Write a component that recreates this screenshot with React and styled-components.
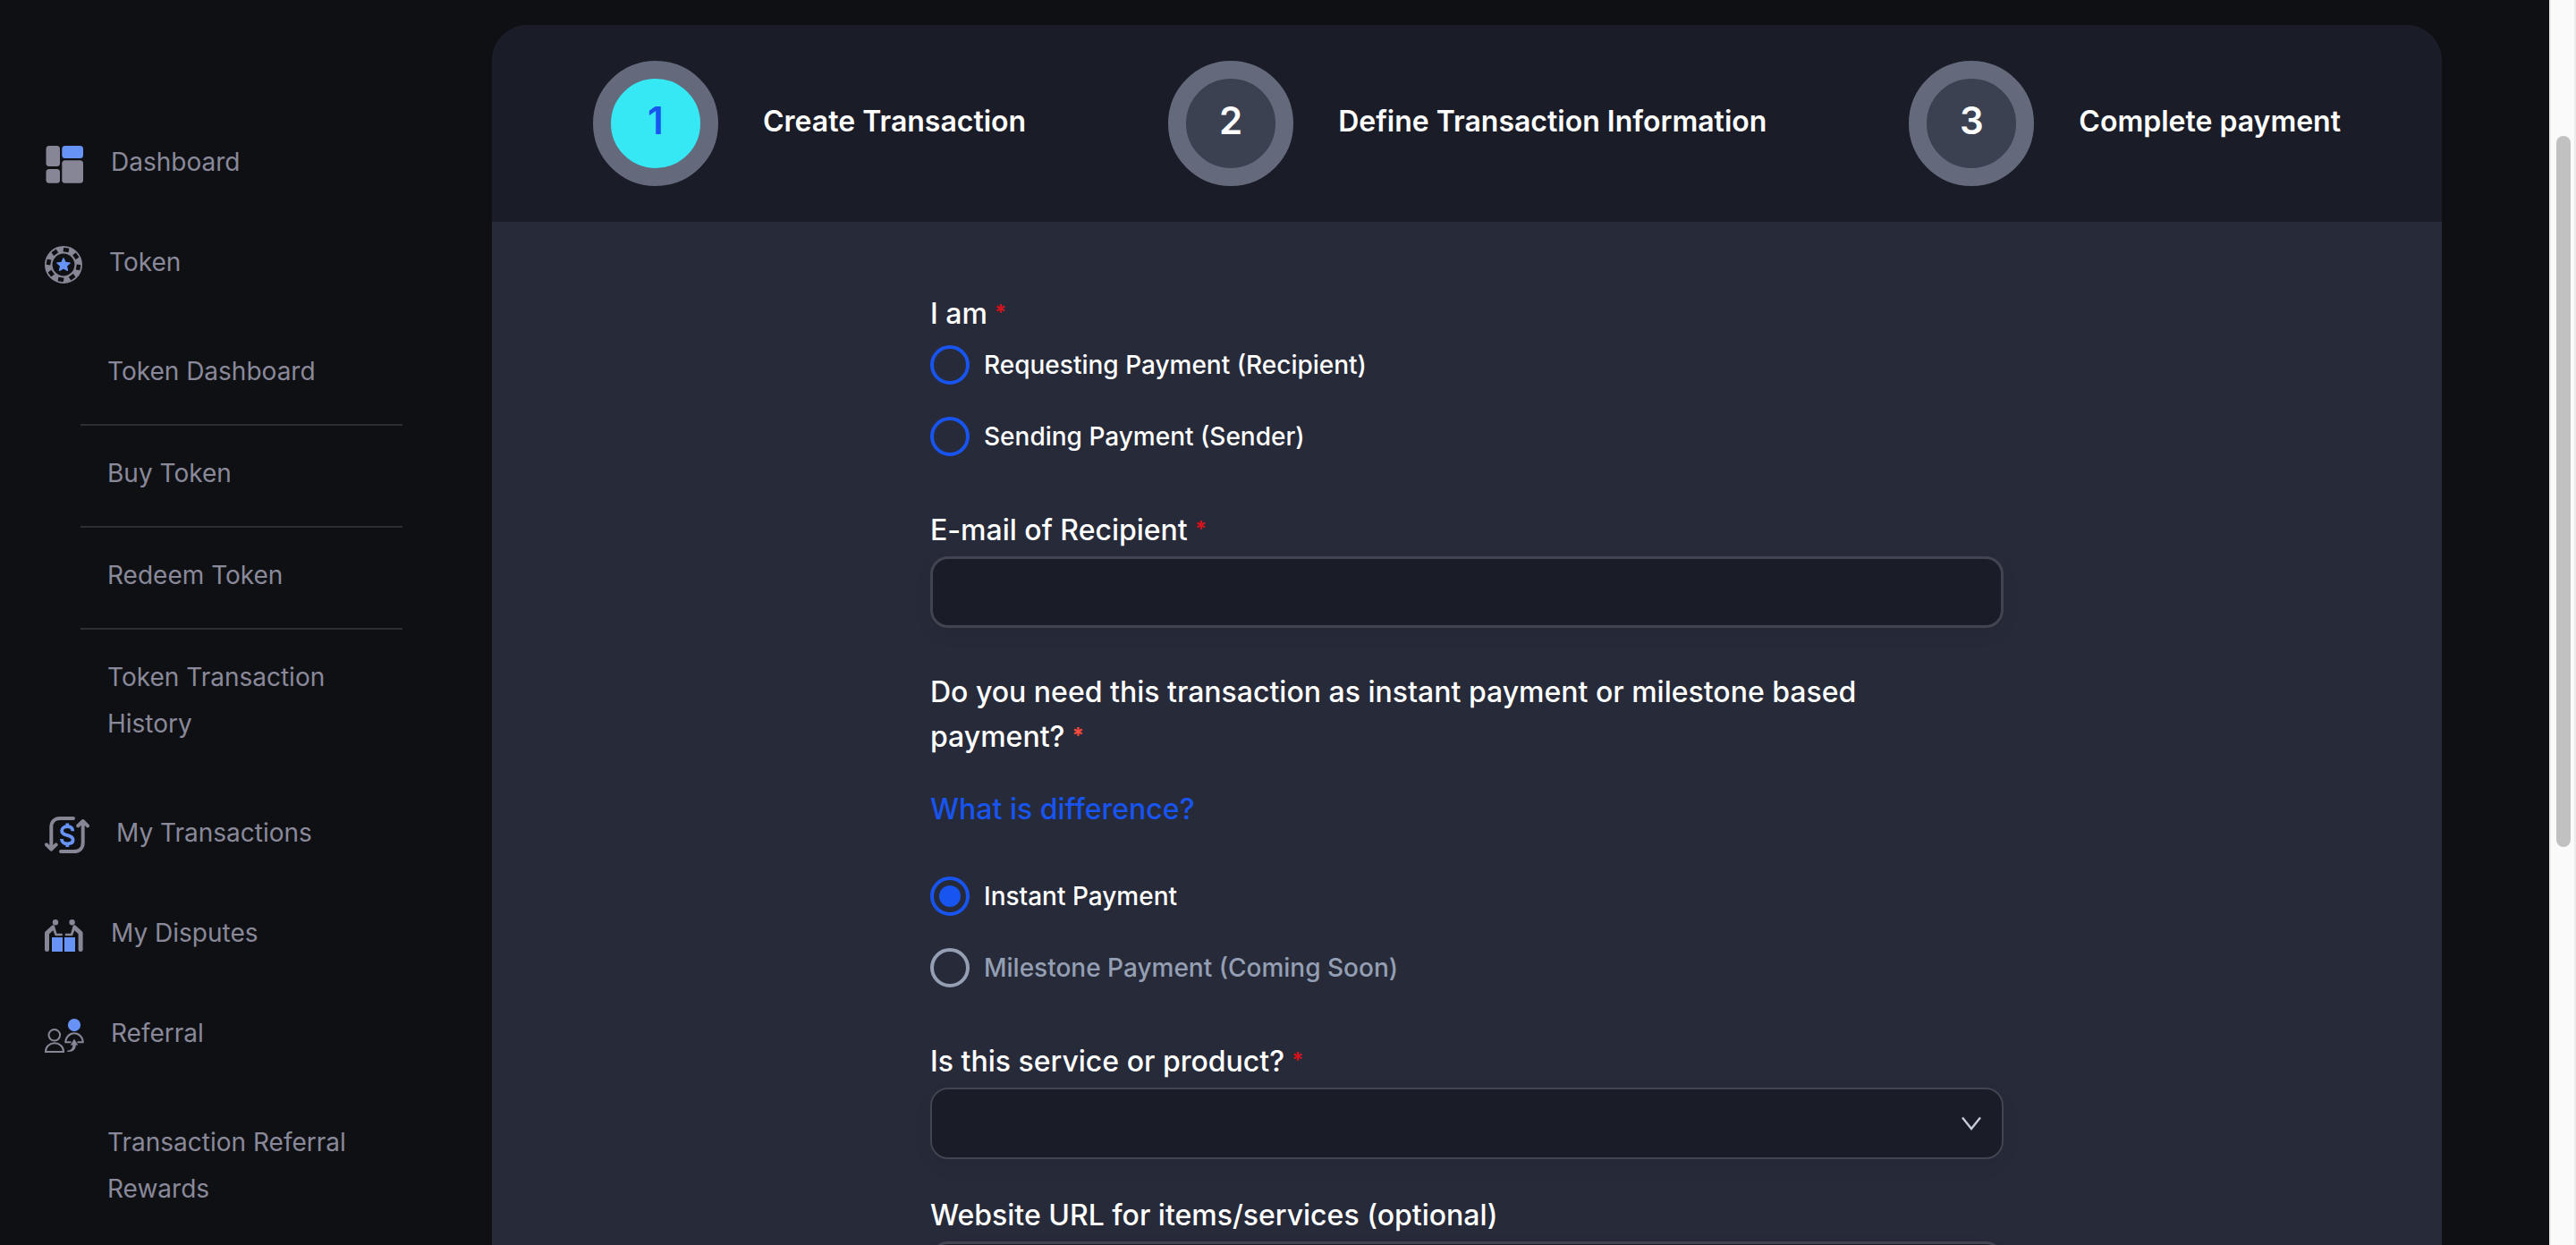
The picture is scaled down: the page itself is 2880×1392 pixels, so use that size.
import React from "react";
import styled, { createGlobalStyle, ThemeProvider } from "styled-components";

const theme = {
  page: "#0f1014",
  panel: "#1a1c27",
  surface: "#272a38",
  border: "#424551",
  divider: "#2c2e33",
  muted: "#8a899a",
  icon: "#878696",
  iconAccent: "#6693f5",
  accent: "#1754f0",
  cyan: "#35e8f3",
  ring: "#646a7c",
  stepOff: "#3b4151",
  disabled: "#949fb3",
};

const GlobalStyle = createGlobalStyle`
  *, *::before, *::after { box-sizing: border-box; }
  body {
    margin: 0;
    background: ${theme.page};
    color: #fff;
    font-family: Inter, "Liberation Sans", sans-serif;
    font-size: 32px;
  }
`;

const Shell = styled.div`
  display: flex;
  height: 100vh;
  overflow: hidden;
  background: ${(p) => p.theme.page};
`;

/* Sidebar */

const Sidebar = styled.nav`
  flex: 0 0 550px;
  padding: 125px 100px 0 50px;
  color: ${(p) => p.theme.muted};
  font-size: 28px;
  line-height: 52px;
`;

const NavLink = styled.a`
  display: flex;
  align-items: center;
  gap: 30px;
  height: 112px;
  color: inherit;
  text-decoration: none;
`;

const NavIcon = styled.svg`
  flex: none;
  display: block;
  box-sizing: content-box;
  padding-top: 6px;
`;

const SubList = styled.ul`
  margin: 0 0 0 40px;
  padding: 13px 0 7px;
  list-style: none;
`;

const SubItem = styled.li`
  padding: 27px 0 33px 30px;

  & + & {
    border-top: 2px solid ${(p) => p.theme.divider};
  }
`;

const SubLink = styled.a`
  display: block;
  color: inherit;
  text-decoration: none;
`;

/* Main card */

const Main = styled.main`
  flex: 1;
  min-width: 0;
  padding: 28px 120px 0 0;
`;

const Card = styled.section`
  min-height: 100%;
  border-radius: 40px 40px 0 0;
  background: ${(p) => p.theme.surface};
  overflow: hidden;
`;

const Steps = styled.ol`
  display: flex;
  align-items: center;
  justify-content: space-between;
  height: 220px;
  margin: 0;
  padding: 0 113px;
  list-style: none;
  background: ${(p) => p.theme.panel};
`;

const Step = styled.li`
  display: flex;
  align-items: center;
  gap: 50px;
  font-weight: 600;
`;

const StepNumber = styled.span`
  display: flex;
  align-items: center;
  justify-content: center;
  width: 140px;
  height: 140px;
  padding-bottom: 8px;
  border: 20px solid ${(p) => p.theme.ring};
  border-radius: 50%;
  background: ${(p) => (p.$active ? p.theme.cyan : p.theme.stepOff)};
  color: ${(p) => (p.$active ? p.theme.accent : "#fff")};
  font-size: 42px;
`;

const StepTitle = styled.span`
  padding-bottom: 6px;
`;

const Form = styled.form`
  width: 100%;
  max-width: 1200px;
  margin: 0 auto;
  padding-top: 78px;
  font-weight: 500;
  line-height: 50px;
`;

const Group = styled.fieldset`
  min-width: 0;
  margin: 0 0 58px;
  padding: 0;
  border: 0;
`;

const Legend = styled.legend`
  max-width: 1120px;
  padding: 0;
`;

const Field = styled.div`
  margin-bottom: ${(p) => p.$after}px;
`;

const Label = styled.label`
  display: block;
  margin-bottom: 4px;
`;

const Required = styled.span`
  margin-left: 8px;
  color: ${(p) => (p.$bright ? "#ff4b3e" : "#d4121c")};
  font-size: 24px;
  font-weight: 700;
  line-height: 1;
  vertical-align: 4px;
`;

const Options = styled.div`
  display: grid;
  gap: 36px;
  padding-top: ${(p) => p.$top}px;
`;

const Option = styled.label`
  display: flex;
  align-items: center;
  gap: 16px;
  height: 44px;
  color: ${(p) => (p.$disabled ? p.theme.disabled : "#fff")};
  font-size: 28px;
`;

const Radio = styled.input`
  appearance: none;
  display: grid;
  place-items: center;
  flex: none;
  width: 44px;
  height: 44px;
  margin: 0;
  border: 4px solid ${(p) => p.theme.accent};
  border-radius: 50%;

  &:disabled {
    border-color: ${(p) => p.theme.disabled};
  }

  &:checked::before {
    content: "";
    width: 24px;
    height: 24px;
    border-radius: 50%;
    background: ${(p) => p.theme.accent};
  }
`;

const HelpLink = styled.a`
  display: block;
  width: max-content;
  margin-top: 31px;
  color: ${(p) => p.theme.accent};
  font-weight: 500;
  text-decoration: none;
`;

const TextInput = styled.input`
  display: block;
  width: 100%;
  height: 80px;
  padding: 0 24px;
  border: 3px solid ${(p) => p.theme.border};
  border-radius: 20px;
  outline: none;
  background: ${(p) => p.theme.panel};
  box-shadow: 0 8px 20px rgba(0, 0, 0, 0.06);
  color: #fff;
  font: inherit;
`;

const SelectBox = styled.div`
  position: relative;
`;

const Select = styled(TextInput).attrs({ as: "select" })`
  appearance: none;
  border-width: 2px;
`;

const Chevron = styled.svg`
  position: absolute;
  top: 32px;
  right: 24px;
  pointer-events: none;
`;

/* Page scrollbar */

const ScrollTrack = styled.div`
  flex: 0 0 30px;
  padding: 152px 4px 0 6px;
  border: solid #ebebeb;
  border-width: 0 2px;
  background: #fafafa;
`;

const ScrollThumb = styled.div`
  width: 16px;
  height: 795px;
  border-radius: 8px;
  background: #c1c1c1;
`;

const DashboardIcon = () => (
  <NavIcon width="44" height="42" viewBox="-1 0 44 42" aria-hidden="true">
    <g fill={theme.icon}>
      <rect x="0.5" width="15.5" height="23" rx="3.5" />
      <rect x="0.5" y="26" width="15.5" height="15.7" rx="3.5" />
      <rect x="18.3" y="16.3" width="23.7" height="25.4" rx="3.5" />
    </g>
    <rect x="18.3" width="23.7" height="14" rx="3.5" fill={theme.iconAccent} />
  </NavIcon>
);

const TokenIcon = () => (
  <NavIcon width="42" height="42" viewBox="-21 -21 42 42" aria-hidden="true">
    <circle r="16.7" fill="none" stroke={theme.icon} strokeWidth="8.6" />
    {[10, 55, 100, 145, 190, 235, 280, 325].map((angle) => (
      <rect
        key={angle}
        x="-3.1"
        y="-19.1"
        width="6.2"
        height="4.6"
        fill={theme.page}
        transform={`rotate(${angle})`}
      />
    ))}
    <path
      d="M0-7.2 2.2-2.6 7.2-2 3.5 1.4 4.5 6.4 0 4-4.5 6.4-3.5 1.4-7.2-2-2.2-2.6Z"
      fill={theme.iconAccent}
      stroke={theme.iconAccent}
      strokeWidth="1.2"
      strokeLinejoin="round"
    />
  </NavIcon>
);

const TransactionsIcon = () => (
  <NavIcon width="50" height="42" viewBox="0 0 50 42" fill="none" aria-hidden="true">
    <g stroke={theme.icon} strokeWidth="4" strokeLinecap="round" strokeLinejoin="round">
      <path d="M32 2H17C11 2 7.3 6 7.3 12V36.5M2 31.3l5.3 5.4 5.4-5.4" />
      <path d="M18 39H33c6 0 9.7-4 9.7-10V5.5M37.3 10.3 42.7 5l5.3 5.3" />
    </g>
    <path
      d="M31.300 16.200c0-3.400-2.500-5.200-6-5.200s-6.200 2-6.200 5c0 3.600 3 4 6.200 4.900s6.300 2 6.300 5.200-2.600 4.300-6.300 4.300-6.400-2-6.400-5.400M25.300 7.500v4M25.300 30v4"
      stroke={theme.iconAccent}
      strokeWidth="3.8"
    />
  </NavIcon>
);

const Disputant = ({ transform }) => (
  <g transform={transform} fill={theme.icon}>
    <circle cx="12" cy="3.2" r="3.2" />
    <path d="M0 15.5c0-1 .3-1.6 1-2.3L8 6.8c1.300-1.100 2.600-.6 3.100.7l2.400 8.200h5.200a1.300 1.300 0 0 1 0 2.600h-7L9.300 12.300 5 16.200V33.500a2.500 2.500 0 0 1-5 0Z" />
  </g>
);

const DisputesIcon = () => (
  <NavIcon width="44" height="36" viewBox="0 0 44 36" aria-hidden="true">
    <Disputant />
    <Disputant transform="matrix(-1 0 0 1 42.6 0)" />
    <path d="M8 20h12v16H8ZM22 20h12v16H22Z" fill={theme.iconAccent} />
  </NavIcon>
);

const ReferralIcon = () => (
  <NavIcon width="44" height="38" viewBox="0 0 44 38" fill="none" aria-hidden="true">
    <circle cx="33" cy="7.1" r="7.1" fill={theme.iconAccent} />
    <g stroke={theme.icon} strokeWidth="2">
      <circle cx="10.8" cy="18.3" r="6.3" />
      <path d="M1 37v-.5a10 9.3 0 0 1 20 0v.5Z" />
      <path d="M29.5 26.3h-6.2a9.700 10 0 0 1 19.400 0h-6.200" />
    </g>
    <path
      d="M33 22.500l4.200 7h-2.400c0 5-3.300 8-9.800 7.300v-1c4-.3 6-2.300 6.300-6.300h-2.500Z"
      fill={theme.icon}
    />
  </NavIcon>
);

const NAV = [
  { label: "Dashboard", Icon: DashboardIcon },
  {
    label: "Token",
    Icon: TokenIcon,
    children: ["Token Dashboard", "Buy Token", "Redeem Token", "Token Transaction History"],
  },
  { label: "My Transactions", Icon: TransactionsIcon },
  { label: "My Disputes", Icon: DisputesIcon },
  { label: "Referral", Icon: ReferralIcon, children: ["Transaction Referral Rewards"] },
];

const STEPS = ["Create Transaction", "Define Transaction Information", "Complete payment"];

export default function App() {
  return (
    <ThemeProvider theme={theme}>
      <GlobalStyle />
      <Shell>
        <Sidebar aria-label="Main">
          {NAV.map(({ label, Icon, children }) => (
            <React.Fragment key={label}>
              <NavLink href="#">
                <Icon />
                {label}
              </NavLink>
              {children && (
                <SubList>
                  {children.map((child) => (
                    <SubItem key={child}>
                      <SubLink href="#">{child}</SubLink>
                    </SubItem>
                  ))}
                </SubList>
              )}
            </React.Fragment>
          ))}
        </Sidebar>

        <Main>
          <Card>
            <Steps>
              {STEPS.map((title, i) => (
                <Step key={title}>
                  <StepNumber $active={i === 0}>{i + 1}</StepNumber>
                  <StepTitle>{title}</StepTitle>
                </Step>
              ))}
            </Steps>

            <Form>
              <Group>
                <Legend>
                  I am<Required>*</Required>
                </Legend>
                <Options $top={10}>
                  <Option>
                    <Radio type="radio" name="role" value="recipient" />
                    Requesting Payment (Recipient)
                  </Option>
                  <Option>
                    <Radio type="radio" name="role" value="sender" />
                    Sending Payment (Sender)
                  </Option>
                </Options>
              </Group>

              <Field $after={47}>
                <Label htmlFor="email">
                  E-mail of Recipient<Required>*</Required>
                </Label>
                <TextInput id="email" type="email" />
              </Field>

              <Group>
                <Legend>
                  Do you need this transaction as instant payment or milestone based payment?
                  <Required $bright>*</Required>
                </Legend>
                <HelpLink href="#">What is difference?</HelpLink>
                <Options $top={50}>
                  <Option>
                    <Radio type="radio" name="kind" value="instant" defaultChecked />
                    Instant Payment
                  </Option>
                  <Option $disabled>
                    <Radio type="radio" name="kind" value="milestone" disabled />
                    Milestone Payment (Coming Soon)
                  </Option>
                </Options>
              </Group>

              <Field $after={38}>
                <Label htmlFor="category">
                  Is this service or product?<Required>*</Required>
                </Label>
                <SelectBox>
                  <Select id="category" defaultValue="">
                    <option value="" />
                  </Select>
                  <Chevron width="24" height="16" viewBox="0 0 24 16" fill="none" aria-hidden="true">
                    <path d="M2 1.5 12 14 22 1.5" stroke="#c5cbd6" strokeWidth="2.4" />
                  </Chevron>
                </SelectBox>
              </Field>

              <Field $after={47}>
                <Label htmlFor="website">Website URL for items/services (optional)</Label>
                <TextInput id="website" type="url" />
              </Field>
            </Form>
          </Card>
        </Main>

        <ScrollTrack aria-hidden="true">
          <ScrollThumb />
        </ScrollTrack>
      </Shell>
    </ThemeProvider>
  );
}
